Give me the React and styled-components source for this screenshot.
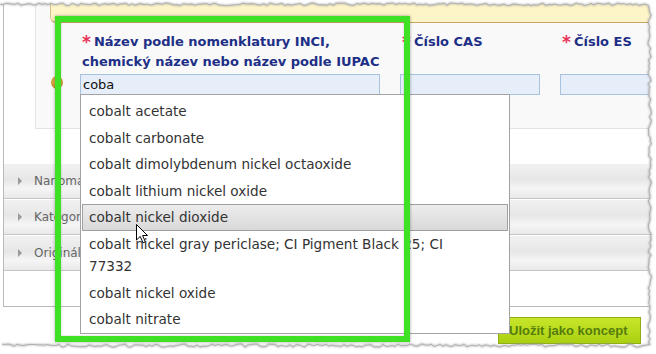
import React from 'react';
import styled, { createGlobalStyle } from 'styled-components';

const GlobalStyle = createGlobalStyle`
  html, body {
    margin: 0;
    padding: 0;
    background: #ffffff;
  }
  body {
    font-family: "DejaVu Sans", Verdana, sans-serif;
  }
`;

const Page = styled.div`
  position: relative;
  width: 656px;
  height: 354px;
  overflow: hidden;
  background: #ffffff;
`;

const Frame = styled.div`
  margin-left: 3px;
  height: 306px;
  border-left: 1px solid #b9b9b9;
  border-bottom: 1px solid #b9b9b9;
`;

const FieldsPanel = styled.div`
  position: relative;
  box-sizing: border-box;
  margin-left: 31px;
  height: 129px;
  background: #f9f9f9;
  border-left: 1px solid #e3e3e3;
  border-bottom: 1px solid #e3e3e3;
`;

const NoticeBar = styled.div`
  margin-left: 14px;
  height: 22px;
  background: #fdf4c8;
  border-bottom: 1px solid #c7a564;
  border-left: 1px solid #d9c08a;
  border-bottom-left-radius: 6px;
`;

const FieldsRow = styled.div`
  display: flex;
  gap: 20px;
  padding-left: 44px;
  margin-top: 9px;
`;

const Field = styled.div`
  display: flex;
  flex-direction: column;
  width: ${({ w }) => w}px;
  flex-shrink: 0;
`;

const Label = styled.div`
  min-height: 40px;
  padding-left: 2px;
  font-size: 13px;
  font-weight: bold;
  line-height: 20px;
  color: #1d2f86;
`;

const Required = styled.span`
  color: #ec2f55;
  font-size: 17px;
  margin-right: 3px;
  vertical-align: top;
  line-height: 20px;
`;

const Input = styled.div`
  box-sizing: border-box;
  height: 21px;
  margin-top: 2px;
  padding-left: 2px;
  background: #e5eef9;
  border: 1px solid #a8c3e0;
  font-size: 13px;
  line-height: 19px;
  color: #111;
`;

const Handle = styled.span`
  position: absolute;
  left: 15px;
  top: 76px;
  width: 12px;
  height: 13px;
  border-radius: 50%;
  background: radial-gradient(circle at 45% 40%, #e6b85a, #c38d2c 75%);
`;

const Accordion = styled.div`
  margin-top: 34px;
`;

const AccordionRow = styled.div`
  box-sizing: border-box;
  display: flex;
  align-items: center;
  gap: 12px;
  height: 36px;
  padding-left: 14px;
  border-top: 1px solid #ffffff;
  border-bottom: 1px solid #c5c5c5;
  background: linear-gradient(#f1f1f1, #e7e7e7 45%, #f5f5f5 72%, #e9e9e9);
  font-size: 12px;
  color: #666;
`;

const Caret = styled.span`
  width: 0;
  height: 0;
  border-top: 4px solid transparent;
  border-bottom: 4px solid transparent;
  border-left: 4px solid #9a9a9a;
`;

const Footer = styled.div`
  display: flex;
  justify-content: flex-end;
  padding: 10px 15px 0 0;
`;

const SaveButton = styled.button`
  box-sizing: border-box;
  height: 27px;
  width: 143px;
  padding: 0 0 0 10px;
  text-align: left;
  border: 1px solid #8fae12;
  background: linear-gradient(#c7e62a, #aad011);
  font-family: "Liberation Sans", Arial, sans-serif;
  font-size: 13px;
  font-weight: bold;
  color: #567c0c;
`;

const Suggestions = styled.ul`
  position: absolute;
  left: 80px;
  top: 94px;
  box-sizing: border-box;
  width: 430px;
  height: 240px;
  margin: 0;
  padding: 3px 1px 0;
  list-style: none;
  background: #ffffff;
  border: 1px solid #a3a3a3;
`;

const Suggestion = styled.li`
  padding: 1px 24px 1px 6px;
  border: 1px solid ${({ active }) => (active ? '#a0a0a0' : 'transparent')};
  background: ${({ active }) => (active ? 'linear-gradient(#ececec, #e2e2e2 55%, #d9d9d9)' : 'transparent')};
  font-size: 13.6px;
  line-height: 22.5px;
  color: #333;
`;

const Highlight = styled.div`
  position: absolute;
  left: 55px;
  top: 16px;
  width: 355px;
  height: 326px;
  box-sizing: border-box;
  border: 6px solid #3fe124;
  box-shadow: 0 0 3px rgba(0, 0, 0, 0.35), inset 0 0 2px rgba(0, 0, 0, 0.25);
`;

const Pointer = styled.svg`
  position: absolute;
  left: 136px;
  top: 224px;
`;

const Torn = styled.svg`
  position: absolute;
  left: 0;
  top: 0;
  pointer-events: none;
`;

const suggestions = [
  'cobalt acetate',
  'cobalt carbonate',
  'cobalt dimolybdenum nickel octaoxide',
  'cobalt lithium nickel oxide',
  'cobalt nickel dioxide',
  'cobalt nickel gray periclase; CI Pigment Black 25; CI 77332',
  'cobalt nickel oxide',
  'cobalt nitrate',
];

const sections = ['Nanomateriál', 'Kategorie látky', 'Originální označení'];

// ragged "torn paper" edge of the screenshot
const rand = (() => {
  let s = 7;
  return () => {
    s = (s * 9301 + 49297) % 233280;
    return s / 233280;
  };
})();

const tornEdge = (() => {
  const pts = [];
  for (let x = 0; x <= 650; x += 3) pts.push([x, 3 + rand() * 2.6]);
  for (let y = 6; y <= 344; y += 3) pts.push([648 + rand() * 3.5, y]);
  for (let x = 650; x >= 0; x -= 3) pts.push([x, 344 + rand() * 3.2]);
  return pts.map(([x, y], i) => `${i ? 'L' : 'M'}${x.toFixed(1)} ${y.toFixed(1)}`).join(' ');
})();

const TornEdge = () => (
  <Torn width="656" height="354" viewBox="0 0 656 354">
    <defs>
      <filter id="edge-shadow" x="-5%" y="-5%" width="110%" height="110%">
        <feGaussianBlur stdDeviation="0.8" />
      </filter>
    </defs>
    <path d={`M-2 -2 H658 V356 H-2 Z ${tornEdge} L-2 346 L-2 4 Z`} fill="#ffffff" fillRule="evenodd" />
    <path d={tornEdge} fill="none" stroke="#9a9a9a" strokeWidth="1.2" filter="url(#edge-shadow)" />
    <path d={tornEdge} fill="none" stroke="#a8a8a8" strokeWidth="0.8" />
  </Torn>
);

const App = () => (
  <Page>
    <GlobalStyle />
    <Frame>
      <FieldsPanel>
        <NoticeBar />
        <Handle />
        <FieldsRow>
          <Field w={300}>
            <Label>
              <Required>*</Required>Název podle nomenklatury INCI, chemický název nebo název podle IUPAC
            </Label>
            <Input>coba</Input>
          </Field>
          <Field w={140}>
            <Label>
              <Required>*</Required>Číslo CAS
            </Label>
            <Input />
          </Field>
          <Field w={140}>
            <Label>
              <Required>*</Required>Číslo ES
            </Label>
            <Input />
          </Field>
        </FieldsRow>
      </FieldsPanel>
      <Accordion>
        {sections.map((s) => (
          <AccordionRow key={s}>
            <Caret />
            {s}
          </AccordionRow>
        ))}
      </Accordion>
    </Frame>
    <Footer>
      <SaveButton>Uložit jako koncept</SaveButton>
    </Footer>

    <Suggestions>
      {suggestions.map((s, i) => (
        <Suggestion key={s} active={i === 4}>
          {s}
        </Suggestion>
      ))}
    </Suggestions>

    <Highlight />

    <Pointer width="13" height="20" viewBox="0 0 13 20">
      <path d="M0.5 0.5 L0.5 16 L4.2 12.4 L7 18.8 L9.3 17.8 L6.6 11.5 L11.5 11.5 Z" fill="#ffffff" stroke="#000000" strokeWidth="1" strokeLinejoin="round" />
    </Pointer>

    <TornEdge />
  </Page>
);

export default App;
